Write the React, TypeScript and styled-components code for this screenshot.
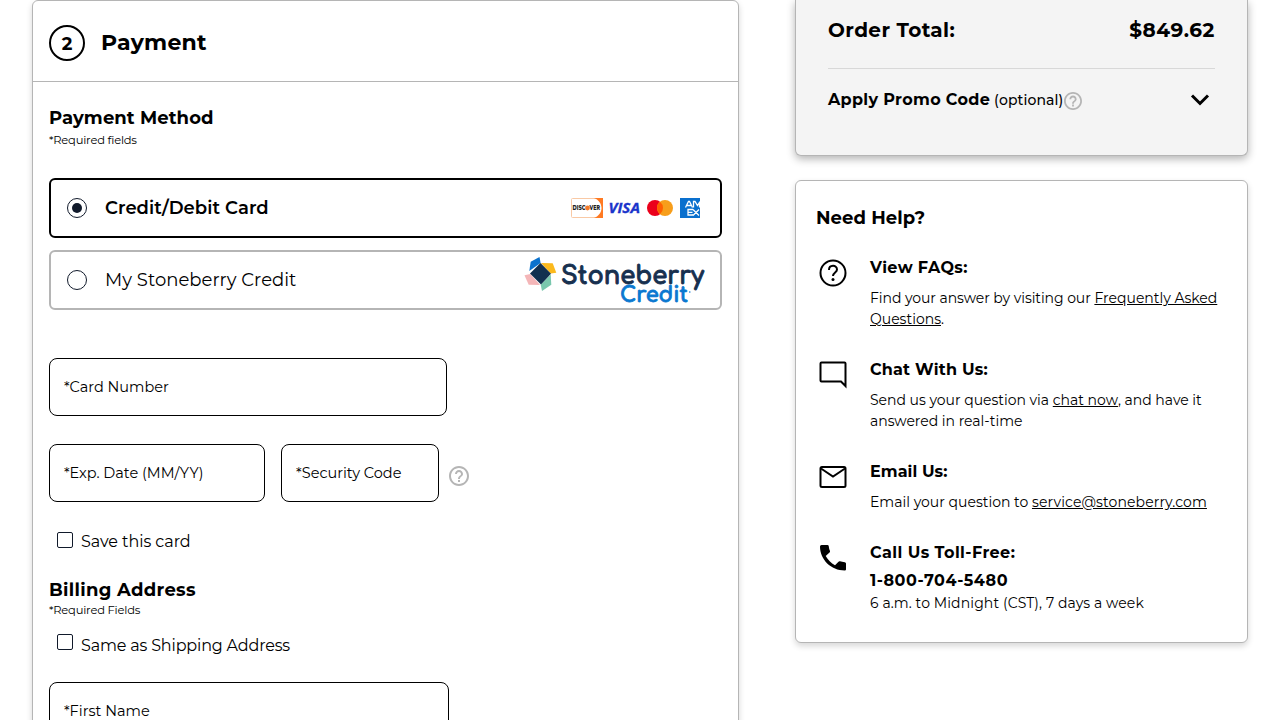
import React from 'react';
import styled, { createGlobalStyle } from 'styled-components';

const GlobalStyle = createGlobalStyle`
  *, *::before, *::after { box-sizing: border-box; }
  html, body { margin: 0; padding: 0; background: #fff; }
  body {
    height: 720px;
    overflow: hidden;
    font-family: Montserrat, Inter, sans-serif;
    font-size: 16px;
    color: #000;
  }
  h2, h3, h4, p { margin: 0; }
`;

const Page = styled.main`
  display: flex;
  align-items: flex-start;
  justify-content: space-between;
  height: 720px;
  padding: 0 32px;
  overflow: hidden;
`;

const PaymentCard = styled.section`
  width: 707px;
  height: 760px;
  border: 1px solid #b5b5b5;
  border-radius: 6px;
  background: #fff;
  box-shadow: 0 3px 6px rgba(0, 0, 0, 0.16);
`;

const CardHeader = styled.header`
  display: flex;
  align-items: center;
  gap: 16px;
  height: 81px;
  padding: 4px 16px 0;
  border-bottom: 1px solid #b5b5b5;
`;

const StepBadge = styled.span`
  display: flex;
  align-items: center;
  justify-content: center;
  width: 36px;
  height: 36px;
  padding-top: 1px;
  border: 2px solid #000;
  border-radius: 50%;
  font-size: 18px;
  font-weight: 700;
`;

const StepTitle = styled.h2`
  font-size: 22px;
  line-height: 28px;
  font-weight: 700;
  letter-spacing: 0.25px;
`;

const CardBody = styled.div`
  display: flex;
  flex-direction: column;
  align-items: flex-start;
  padding: 24px 16px 0;
`;

const SectionTitle = styled.h3<{ $track?: number }>`
  font-size: 18px;
  line-height: 24px;
  font-weight: 700;
  letter-spacing: ${(p) => p.$track ?? 0.08}px;
`;

const RequiredNote = styled.p<{ $lineHeight: number }>`
  font-size: 11.5px;
  line-height: ${(p) => p.$lineHeight}px;
  letter-spacing: -0.2px;
`;

const MethodList = styled.div`
  display: flex;
  flex-direction: column;
  gap: 12px;
  width: 673px;
  margin: 28px 0 48px;
`;

const MethodOption = styled.label<{ $selected?: boolean }>`
  display: flex;
  align-items: center;
  height: 60px;
  padding: 0 16px;
  border: 2px solid ${(p) => (p.$selected ? '#000' : '#b5b5b5')};
  border-radius: 6px;
  font-size: 18px;
  font-weight: ${(p) => (p.$selected ? 600 : 400)};
  letter-spacing: 0.04px;
`;

const Radio = styled.span<{ $checked?: boolean }>`
  display: flex;
  align-items: center;
  justify-content: center;
  width: 20px;
  height: 20px;
  margin-right: 18px;
  border: 1px solid #111a2b;
  border-radius: 50%;

  &::after {
    content: '';
    width: 10px;
    height: 10px;
    border-radius: 50%;
    background: ${(p) => (p.$checked ? '#111a2b' : 'transparent')};
  }
`;

const CardBrands = styled.svg`
  width: 130px;
  height: 22px;
  margin-left: auto;
  margin-right: 3px;
`;

const StoneberryLogo = styled.svg`
  width: 182px;
  height: 50px;
  margin-left: auto;
  margin-right: -2px;
  overflow: visible;
`;

const FieldRow = styled.div<{ $top?: number }>`
  display: flex;
  align-items: center;
  gap: 16px;
  margin-top: ${(p) => p.$top ?? 28}px;
`;

const Field = styled.div<{ $width: number }>`
  display: flex;
  align-items: center;
  width: ${(p) => p.$width}px;
  height: 58px;
  padding: 0 14px 1px;
  border: 1px solid #000;
  border-radius: 8px;
  font-size: 14.5px;
`;

const HelpIcon = styled.svg<{ $size: number }>`
  flex: none;
  width: ${(p) => p.$size}px;
  height: ${(p) => p.$size}px;
  fill: #b5b5b5;
`;

const SecurityHelp = styled.span`
  display: flex;
  margin: 6px 0 0 -6px;
`;

const CheckRow = styled.label`
  display: flex;
  gap: 8px;
  height: 20px;
  padding-left: 8px;
  line-height: 20px;
`;

const CheckBox = styled.span`
  width: 16px;
  height: 16px;
  border: 1px solid #111a2b;
  border-radius: 2px;
`;

const CheckLabel = styled.span`
  letter-spacing: -0.07px;
`;

const BillingHeading = styled.div`
  margin: 26px 0 16px;
`;

const SameLabel = styled(CheckLabel)`
  padding-top: 2px;
  letter-spacing: -0.17px;
`;

const FirstNameRow = styled.div`
  margin-top: 28px;
`;

const Sidebar = styled.aside`
  display: flex;
  flex-direction: column;
  gap: 24px;
  width: 453px;
`;

const SummaryCard = styled.section`
  height: 156px;
  padding: 0 32px;
  border: 1px solid #b5b5b5;
  border-top: 0;
  border-radius: 0 0 6px 6px;
  background: #f4f4f4;
  box-shadow: 0 3px 8px rgba(0, 0, 0, 0.3);
`;

const TotalRow = styled.div`
  display: flex;
  justify-content: space-between;
  height: 69px;
  padding-top: 17px;
  border-bottom: 1px solid #d8d8d8;
  font-size: 20px;
  line-height: 26px;
  font-weight: 700;
  letter-spacing: 0.4px;
`;

const TotalAmount = styled.span`
  letter-spacing: 0.6px;
`;

const PromoRow = styled.div`
  display: flex;
  align-items: center;
  height: 62px;
  font-weight: 700;
  letter-spacing: 0.33px;
`;

const PromoLabel = styled.span`
  margin-top: -2px;
`;

const PromoHelp = styled.span`
  display: flex;
  margin-top: 1px;
`;

const Optional = styled.span`
  margin-left: 4px;
  margin-right: 1px;
  font-size: 14px;
  font-weight: 500;
  letter-spacing: 0.1px;
`;

const Chevron = styled.svg`
  width: 20px;
  height: 14px;
  margin-left: auto;
  margin-right: 5px;
  fill: none;
  stroke: #000;
  stroke-width: 3;
`;

const HelpCard = styled.section`
  height: 463px;
  padding: 25px 20px 0;
  border: 1px solid #b5b5b5;
  border-radius: 6px;
  background: #fff;
  box-shadow: 0 3px 6px rgba(0, 0, 0, 0.16);
`;

const HelpItem = styled.div<{ $top: number }>`
  display: flex;
  align-items: flex-start;
  gap: 20px;
  margin-top: ${(p) => p.$top}px;
`;

const ContactIcon = styled.svg`
  flex: none;
  width: 34px;
  height: 34px;
  margin-top: -1px;
`;

const HelpTitle = styled.h4<{ $track: number }>`
  font-size: 16px;
  line-height: 22px;
  font-weight: 700;
  letter-spacing: ${(p) => p.$track}px;
`;

const HelpText = styled.p<{ $top?: number; $track: number }>`
  margin-top: ${(p) => p.$top ?? 9}px;
  font-size: 14px;
  line-height: 21px;
  letter-spacing: ${(p) => p.$track}px;
`;

const Phone = styled(HelpTitle)`
  margin-top: 6px;
`;

const TextLink = styled.a<{ $track?: number }>`
  text-decoration: underline;
  letter-spacing: ${(p) => p.$track ?? 0}px;
`;

const questionPath =
  'M11 18h2v-2h-2v2zm1-16C6.480 2 2 6.480 2 12s4.480 10 10 10 10-4.480 10-10S17.520 2 12 2zm0 18c-4.410 0-8-3.590-8-8s3.590-8 8-8 8 3.590 8 8-3.590 8-8 8zm0-14c-2.210 0-4 1.790-4 4h2c0-1.100.9-2 2-2s2 .9 2 2c0 2-3 1.750-3 5h2c0-2.250 3-2.500 3-5 0-2.210-1.790-4-4-4z';

function Help({ size }: { size: number }) {
  return (
    <HelpIcon $size={size} viewBox="2 2 20 20">
      <path d={questionPath} />
    </HelpIcon>
  );
}

function Brands() {
  return (
    <CardBrands viewBox="0 0 130 22">
      <rect x="0.5" y="1.500" width="31" height="19" rx="1" fill="#fff" stroke="#f9c9a5" />
      <path d="M23 1H32V21H23C28 19 30.500 15 30.500 11S28 3 23 1Z" fill="#ff7a22" />
      <text x="1.500" y="13.300" fontFamily="Montserrat, Inter, sans-serif" fontSize="6.500" fontWeight="800" fill="#222" textLength="13" lengthAdjust="spacingAndGlyphs">DISC</text>
      <circle cx="16.500" cy="11" r="2.400" fill="#f47a2a" />
      <text x="18.600" y="13.300" fontFamily="Montserrat, Inter, sans-serif" fontSize="6.500" fontWeight="800" fill="#222" textLength="10.400" lengthAdjust="spacingAndGlyphs">VER</text>
      <text x="37.500" y="16" fontFamily="Open Sans, sans-serif" fontSize="14" fontWeight="700" fontStyle="italic" fill="#1a34cb" stroke="#1a34cb" strokeWidth="0.3" textLength="31.500" lengthAdjust="spacingAndGlyphs">VISA</text>
      <circle cx="84" cy="11" r="8" fill="#eb001b" />
      <circle cx="94" cy="11" r="8" fill="#f79e1b" />
      <path d="M89 4.760A8 8 0 0 1 89 17.240A8 8 0 0 1 89 4.760Z" fill="#ff5f00" />
      <rect x="109" y="1" width="20" height="20" fill="#0a70ce" />
      <g fill="none" stroke="#fff" strokeWidth="1.300">
        <path d="M114.500 10.500L117.500 4.500H118.500L121.500 10.500M116 8.500H120.500M122.500 10.500V4.500H124L126.500 8.500L129 4.500M128.500 10.500V6" />
        <path d="M122 12.500H117V18H122M117 15.300H121.500M122 12.500L128 18.500M128 12.500L122 18.500" />
      </g>
    </CardBrands>
  );
}

function Logo() {
  return (
    <StoneberryLogo viewBox="0 0 182 50">
      <path d="M5.300 16L6.700 6.700L15.500 2L16.600 8Z" fill="#0a72ce" />
      <path d="M17 8L28.700 8.300L32.300 17.700L26.700 18.500Z" fill="#fbb91d" />
      <path d="M6.300 19L0.500 20.300L4.700 29.700L16 30Z" fill="#f4b6b8" />
      <path d="M26.700 19.500L27.300 29.700L18 36L16.700 29.700Z" fill="#79c7ad" />
      <path d="M16.500 8L27 18.700L17 29.500L6 18.500Z" fill="#12304f" />
      <text x="37" y="29" fontFamily="Comfortaa, Quicksand, 'Varela Round', Montserrat, sans-serif" fontSize="25.500" fontWeight="700" fill="#17304f" stroke="#17304f" strokeWidth="0.9" textLength="143" lengthAdjust="spacingAndGlyphs">Stoneberry</text>
      <text x="96" y="47" fontFamily="Comfortaa, Quicksand, 'Varela Round', Montserrat, sans-serif" fontSize="21" fontWeight="700" fill="#0a78d0" stroke="#0a78d0" strokeWidth="0.8" textLength="68" lengthAdjust="spacingAndGlyphs">Credit</text>
      <circle cx="165.800" cy="37" r="0.800" fill="#0a78d0" />
    </StoneberryLogo>
  );
}

export default function App() {
  return (
    <>
      <GlobalStyle />
      <Page>
        <PaymentCard>
          <CardHeader>
            <StepBadge>2</StepBadge>
            <StepTitle>Payment</StepTitle>
          </CardHeader>
          <CardBody>
            <SectionTitle>Payment Method</SectionTitle>
            <RequiredNote $lineHeight={20}>*Required fields</RequiredNote>
            <MethodList>
              <MethodOption $selected>
                <Radio $checked />
                Credit/Debit Card
                <Brands />
              </MethodOption>
              <MethodOption>
                <Radio />
                My Stoneberry Credit
                <Logo />
              </MethodOption>
            </MethodList>
            <Field $width={398}>*Card Number</Field>
            <FieldRow>
              <Field $width={216}>*Exp. Date (MM/YY)</Field>
              <Field $width={158}>*Security Code</Field>
              <SecurityHelp>
                <Help size={20} />
              </SecurityHelp>
            </FieldRow>
            <FieldRow $top={30}>
              <CheckRow>
                <CheckBox />
                <CheckLabel>Save this card</CheckLabel>
              </CheckRow>
            </FieldRow>
            <BillingHeading>
              <SectionTitle $track={0.3}>Billing Address</SectionTitle>
              <RequiredNote $lineHeight={16}>*Required Fields</RequiredNote>
            </BillingHeading>
            <CheckRow>
              <CheckBox />
              <SameLabel>Same as Shipping Address</SameLabel>
            </CheckRow>
            <FirstNameRow>
              <Field $width={400}>*First Name</Field>
            </FirstNameRow>
          </CardBody>
        </PaymentCard>

        <Sidebar>
          <SummaryCard>
            <TotalRow>
              <span>Order Total:</span>
              <TotalAmount>$849.62</TotalAmount>
            </TotalRow>
            <PromoRow>
              <PromoLabel>
                Apply Promo Code
                <Optional>(optional)</Optional>
              </PromoLabel>
              <PromoHelp>
                <Help size={18} />
              </PromoHelp>
              <Chevron viewBox="0 0 20 14">
                <path d="M2 2.500L10 10.500L18 2.500" />
              </Chevron>
            </PromoRow>
          </SummaryCard>

          <HelpCard>
            <SectionTitle>Need Help?</SectionTitle>
            <HelpItem $top={27}>
              <ContactIcon viewBox="0 0 34 34">
                <circle cx="17" cy="17" r="12.500" fill="none" stroke="#000" strokeWidth="2" />
                <path d="M13 14C13 8.500 21 8.500 21 13.500C21 16.500 17 16.500 17 20" fill="none" stroke="#000" strokeWidth="2" />
                <circle cx="17" cy="23.500" r="1.500" />
              </ContactIcon>
              <div>
                <HelpTitle $track={0.35}>View FAQs:</HelpTitle>
                <HelpText $track={-0.06}>
                  Find your answer by visiting our <TextLink>Frequently Asked Questions</TextLink>.
                </HelpText>
              </div>
            </HelpItem>
            <HelpItem $top={29}>
              <ContactIcon viewBox="0 0 34 34">
                <path d="M5.500 4.500H28.500Q29.500 4.500 29.500 5.500V28L25 23.500H5.500Q4.500 23.500 4.500 22.500V5.500Q4.500 4.500 5.500 4.500Z" fill="none" stroke="#000" strokeWidth="2" />
              </ContactIcon>
              <div>
                <HelpTitle $track={0.2}>Chat With Us:</HelpTitle>
                <HelpText $track={-0.02}>
                  Send us your question via <TextLink>chat now</TextLink>, and have it answered in real-time
                </HelpText>
              </div>
            </HelpItem>
            <HelpItem $top={29}>
              <ContactIcon viewBox="0 0 34 34">
                <rect x="4.500" y="7" width="25" height="20" rx="1.500" fill="none" stroke="#000" strokeWidth="2" />
                <path d="M5 8.500L17 16.500L29 8.500" fill="none" stroke="#000" strokeWidth="2" />
              </ContactIcon>
              <div>
                <HelpTitle $track={0.06}>Email Us:</HelpTitle>
                <HelpText $track={0}>
                  Email your question to <TextLink $track={0.12}>service@stoneberry.com</TextLink>
                </HelpText>
              </div>
            </HelpItem>
            <HelpItem $top={29}>
              <ContactIcon viewBox="0 0 34 34">
                <path d="M5.500 4H11.500Q12.500 4 12.700 5Q13 8 14 10Q14.200 11 13.500 11.600L9.700 15C12 19 15 22 19 24.300L22.500 20.700Q23.200 20 24 20.300Q26 21 28.800 21.200Q30 21.400 30 22.500V28.500Q30 29.500 28.800 29.500C15 29.500 4 18.500 4 5.500Q4 4 5.500 4Z" />
              </ContactIcon>
              <div>
                <HelpTitle $track={0.42}>Call Us Toll-Free:</HelpTitle>
                <Phone $track={0.52}>1-800-704-5480</Phone>
                <HelpText $top={1} $track={0.1}>6 a.m. to Midnight (CST), 7 days a week</HelpText>
              </div>
            </HelpItem>
          </HelpCard>
        </Sidebar>
      </Page>
    </>
  );
}
